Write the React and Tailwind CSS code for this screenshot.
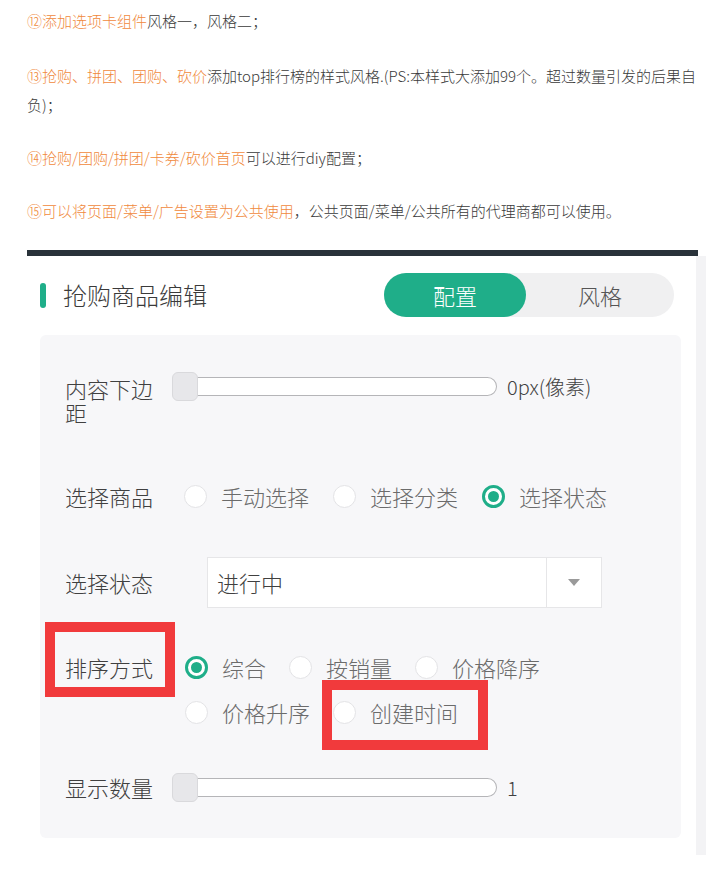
import React from "react";

const orange = "text-[#f0893c]";

function Radio({ checked, label }) {
    return (
        <div className="flex items-center h-[45px]">
            {checked ? (
                <span className="flex items-center justify-center w-[23px] h-[23px] rounded-full border-[3px] border-[#1fae89] bg-white">
                    <span className="w-[11px] h-[11px] rounded-full bg-[#1fae89]" />
                </span>
            ) : (
                <span className="w-[23px] h-[23px] rounded-full border border-[#e3e3e6] bg-white" />
            )}
            <span className="ml-[14px] text-[22px] text-[#6b6b6b]">{label}</span>
        </div>
    );
}

function Slider() {
    return (
        <div className="relative w-[325px] h-[29px] flex items-center">
            {/* track */}
            <div className="ml-[3px] w-[322px] h-[19px] bg-white border border-[#b5b5b8] rounded-r-full rounded-l-[4px]" />
            {/* thumb */}
            <div className="absolute left-0 top-0 w-[26px] h-[29px] rounded-[6px] bg-[#e7e7ea] border border-[#d9d9dc]" />
        </div>
    );
}

export default function App() {
    return (
        <div
            className="w-[721px] h-[878px] bg-white overflow-hidden text-[#3a3a3a] font-light"
            style={{ fontFamily: '"Noto Sans CJK SC", "Noto Sans", sans-serif' }}
        >
            {/* article text */}
            <div className="pl-[27px] pt-[7px] text-[15px]">
                <p className="leading-[27px]">
                    <span className={orange}>⑫添加选项卡组件</span>风格一，风格二；
                </p>
                <div className="h-[27px]" />
                <p className="leading-[29px]">
                    <span className={orange}>⑬抢购、拼团、团购、砍价</span>添加top排行榜的样式风格.(PS:本样式大添加99个。超过数量引发的后果自
                    <br />
                    负)；
                </p>
                <div className="h-[25px]" />
                <p className="leading-[27px]">
                    <span className={orange}>⑭抢购/团购/拼团/卡券/砍价首页</span>可以进行diy配置；
                </p>
                <div className="h-[26px]" />
                <p className="leading-[27px]">
                    <span className={orange}>⑮可以将页面/菜单/广告设置为公共使用</span>，公共页面/菜单/公共所有的代理商都可以使用。
                </p>
            </div>

            {/* editor panel */}
            <div className="mt-[26px] ml-[27px] w-[679px]">
                <div className="w-[671px] h-[6px] bg-[#29323a]" />
                <div className="flex">
                    <div className="w-[669px] h-[599px] bg-white">
                        {/* header */}
                        <div className="flex items-center justify-between pt-[17px] pl-[13px] pr-[22px]">
                            <div className="flex items-center">
                                <span className="w-[6px] h-[25px] rounded-full bg-[#1fae89]" />
                                <span className="ml-[17px] text-[24px] text-[#3a3a3a]">抢购商品编辑</span>
                            </div>
                            <div className="flex w-[290px] h-[44px] rounded-full bg-[#f0f0f1]">
                                <div className="w-[142px] h-full rounded-full bg-[#1fae89] flex items-center justify-center text-[22px] text-white">
                                    配置
                                </div>
                                <div className="flex-1 flex items-center justify-center text-[22px] text-[#555]">
                                    风格
                                </div>
                            </div>
                        </div>

                        {/* form box */}
                        <div className="relative mt-[18px] ml-[13px] w-[641px] h-[503px] rounded-[6px] bg-[#f7f7f9] pl-[25px] pt-[37px]">
                            {/* row 1 */}
                            <div className="flex items-start h-[52px]">
                                <div className="w-[100px] mt-[4px] text-[22px] leading-[24px] text-[#404040]">内容下边距</div>
                                <div className="ml-[7px]">
                                    <Slider />
                                </div>
                                <span className="ml-[10px] text-[20px] leading-[29px] text-[#404040]">0px(像素)</span>
                            </div>

                            {/* row 2 */}
                            <div className="flex items-center h-[44px] mt-[50px]">
                                <div className="w-[100px] text-[22px] text-[#404040]">选择商品</div>
                                <div className="ml-[19px] flex gap-x-[24px]">
                                    <Radio label="手动选择" />
                                    <Radio label="选择分类" />
                                    <Radio checked label="选择状态" />
                                </div>
                            </div>

                            {/* row 3 */}
                            <div className="flex items-center h-[51px] mt-[39px]">
                                <div className="w-[100px] text-[22px] text-[#404040]">选择状态</div>
                                <div className="ml-[42px] flex w-[395px] h-[51px] bg-white border border-[#e6e6e8]">
                                    <div className="flex-1 flex items-center pl-[9px] text-[22px] text-[#404040]">进行中</div>
                                    <div className="w-[55px] border-l border-[#e6e6e8] flex items-center justify-center">
                                        <span className="w-0 h-0 border-l-[6px] border-r-[6px] border-t-[7px] border-l-transparent border-r-transparent border-t-[#9a9a9a]" />
                                    </div>
                                </div>
                            </div>

                            {/* row 4 */}
                            <div className="flex items-start mt-[37px]">
                                <div className="w-[100px] h-[45px] flex items-center text-[22px] text-[#404040]">排序方式</div>
                                <div className="ml-[20px] w-[420px] flex flex-wrap gap-x-[23px]">
                                    <Radio checked label="综合" />
                                    <Radio label="按销量" />
                                    <Radio label="价格降序" />
                                    <Radio label="价格升序" />
                                    <Radio label="创建时间" />
                                </div>
                            </div>

                            {/* row 5 */}
                            <div className="flex items-center h-[29px] mt-[38px]">
                                <div className="w-[100px] text-[22px] text-[#404040]">显示数量</div>
                                <div className="ml-[7px]">
                                    <Slider />
                                </div>
                                <span className="ml-[10px] text-[20px] text-[#404040]">1</span>
                            </div>

                            {/* annotation boxes */}
                            <div className="absolute left-[5px] top-[287px] w-[130px] h-[75px] border-[10px] border-[#f13a3c]" />
                            <div className="absolute left-[282px] top-[345px] w-[166px] h-[70px] border-[10px] border-[#f13a3c]" />
                        </div>
                    </div>
                    <div className="w-[10px] h-[599px] bg-[#f3f3f5]" />
                </div>
            </div>
        </div>
    );
}
